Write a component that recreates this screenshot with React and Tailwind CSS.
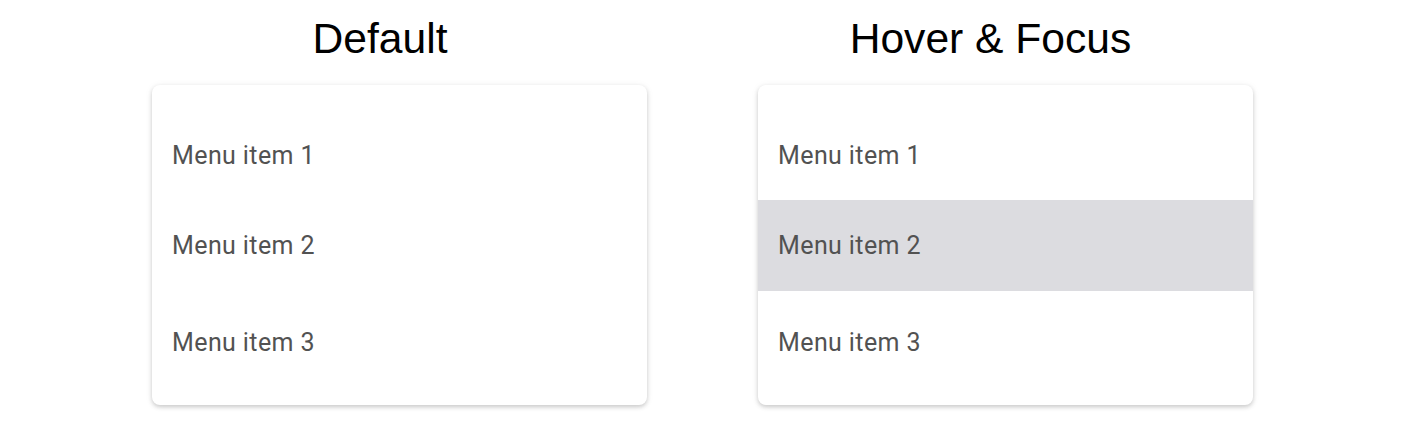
import React from "react";

const items = ["Menu item 1", "Menu item 2", "Menu item 3"];

function Menu({ active }) {
  return (
    <div className="w-[495px] bg-white rounded-lg shadow-[0_2px_4px_rgba(0,0,0,0.18),0_1px_8px_rgba(0,0,0,0.06)] pt-[20px] pb-[20px] overflow-hidden">
      <div className="h-[95px] pt-[5px] px-[20px] flex items-center">
        <span className="text-[25px] tracking-[0.4px] leading-none text-[#525252]">{items[0]}</span>
      </div>
      <div className={"h-[91px] px-[20px] flex items-center " + (active ? "bg-[#dcdce0]" : "bg-white")}>
        <span className="text-[25px] tracking-[0.4px] leading-none text-[#525252]">{items[1]}</span>
      </div>
      <div className="h-[94px] pt-[8px] px-[20px] flex items-center">
        <span className="text-[25px] tracking-[0.4px] leading-none text-[#525252]">{items[2]}</span>
      </div>
    </div>
  );
}

export default function App() {
  return (
    <div className="w-[1422px] h-[430px] bg-white flex gap-[111px] pl-[152px] font-['Roboto',sans-serif]">
      <div className="flex flex-col">
        <h2 className="pt-[17px] pr-[39px] h-[85px] text-center text-[42.6px] leading-none text-black font-['Liberation_Sans',Arial,sans-serif]">
          Default
        </h2>
        <Menu active={false} />
      </div>
      <div className="flex flex-col">
        <h2 className="pt-[17px] pr-[30px] h-[85px] text-center text-[42.6px] leading-none text-black font-['Liberation_Sans',Arial,sans-serif]">
          Hover &amp; Focus
        </h2>
        <Menu active={true} />
      </div>
    </div>
  );
}
